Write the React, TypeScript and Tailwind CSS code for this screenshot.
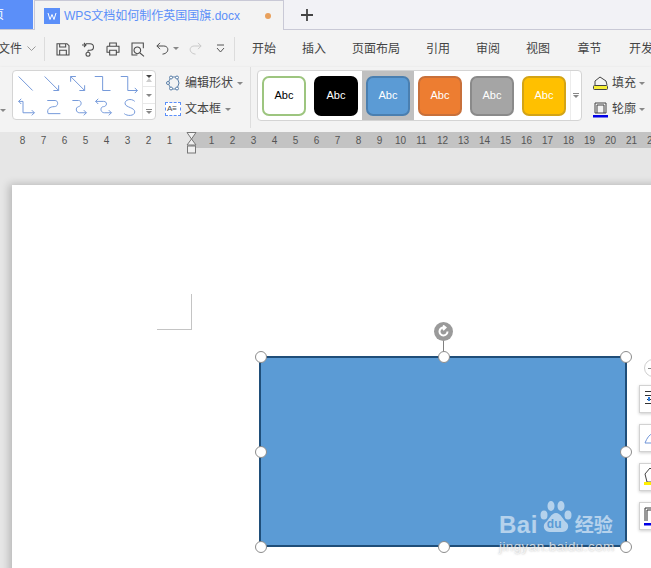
const FONT = "font-['Liberation_Sans','Noto_Sans_CJK_SC',sans-serif]";

const TABS = [
  { label: "开始", w: "w-[50px]" },
  { label: "插入", w: "w-[50px]" },
  { label: "页面布局", w: "w-[74px]" },
  { label: "引用", w: "w-[50px]" },
  { label: "审阅", w: "w-[50px]" },
  { label: "视图", w: "w-[50px]" },
  { label: "章节", w: "w-[53px]" },
  { label: "开发", w: "w-[50px]" },
];

const STYLES = [
  { cls: "bg-white border-[#9dc57f] text-black", sel: false },
  { cls: "bg-black border-black text-white", sel: false },
  { cls: "bg-[#5b9bd5] border-[#4a7fb0] text-white", sel: true },
  { cls: "bg-[#ed7d31] border-[#c8703a] text-white", sel: false },
  { cls: "bg-[#a5a5a5] border-[#8a8a8a] text-white", sel: false },
  { cls: "bg-[#ffc000] border-[#d3a416] text-white", sel: false },
];

const LEFT_RULER = [8, 7, 6, 5, 4, 3, 2, 1];
const RIGHT_RULER = Array.from({ length: 22 }, (_, i) => i + 1);

const LINES = [
  "M3 4 L19 20",
  "M3 4 L19 20 M19 14 V20 H13",
  "M3 4 L19 20 M19 14 V20 H13 M3 10 V4 H9",
  "M2 4 H11 V20 H20",
  "M2 4 H10 V20 H21 M18 17 L21 20 L18 23",
  "M8 5 H3 M3 5 L6 2 M3 5 L6 8 M8 5 V18 H21 M18 15 L21 18 L18 21",
  "M6 4 H15 C19 4 19 11 14 11 C9 11 5 14 7 19 H21",
  "M5 4 H12 C16 4 16 10 12 11 C8 12 9 18 13 18 H21 M18 15 L21 18 L18 21",
  "M3 5 L6 2 M3 5 L6 8 M3 5 H12 C17 5 16 11 12 11 C8 11 8 18 13 18 H21 M18 15 L21 18 L18 21",
  "M18 5 C14 1 6 3 7 8 C8 12 18 12 18 17 C18 22 9 22 6 19",
];

function Glyph({ d, w = 20 }: { d: string; w?: number }) {
  return (
    <svg width={w} height={w} viewBox="0 0 24 24" fill="none" stroke="#4b4b4b" strokeWidth={1.6}>
      <path d={d} />
    </svg>
  );
}

function Caret({ className = "border-t-[#888]" }: { className?: string }) {
  return (
    <span className={`inline-block w-0 h-0 border-x-[3px] border-x-transparent border-t-[3px] ${className}`} />
  );
}

function Handle({ className }: { className: string }) {
  return (
    <span className={`absolute w-[12px] h-[12px] rounded-full bg-white border border-[#8c8c8c] ${className}`} />
  );
}

function SideButton({ children, className }: { children: React.ReactNode; className: string }) {
  return (
    <div className={`absolute left-[639px] w-[30px] h-[28px] bg-white border border-[#d2d2d2] shadow-[0_1px_3px_rgba(0,0,0,0.2)] overflow-hidden ${className}`}>
      {children}
    </div>
  );
}

export default function App() {
  return (
    <div className={`${FONT} relative w-[651px] h-[568px] overflow-hidden bg-[#e6e6e6] text-[#444]`}>
      {/* title bar */}
      <div className="h-[30px] bg-[#f2f2f6] border-b border-[#c9c9d6] flex items-stretch">
        <div className="w-[33px] h-[29px] bg-[#5b8ff9] text-white text-[12px] flex items-center overflow-hidden">
          <span className="-ml-[8px] shrink-0">页</span>
        </div>
        <div className="ml-[1px] w-[250px] h-[30px] bg-[#f3f3f3] border-x border-t border-[#c9c9d6] flex items-center pl-[9px]">
          <span className="w-[16px] h-[16px] bg-[#5b8ff9] flex items-center justify-center shrink-0">
            <svg width="12" height="12" viewBox="0 0 12 12" fill="none" stroke="#fff" strokeWidth={1}>
              <path d="M2 3 L4 9.5 L6 4.5 L8 9.5 L10 3" />
            </svg>
          </span>
          <span className="ml-[4px] text-[12px] text-[#5b8ff9] whitespace-nowrap">WPS文档如何制作英国国旗.docx</span>
          <span className="ml-auto mr-[12px] w-[6px] h-[6px] rounded-full bg-[#e8a05c]" />
        </div>
        <div className="w-[46px] flex items-center justify-center">
          <svg width="14" height="14" viewBox="0 0 14 14" stroke="#444" strokeWidth={1.8}>
            <path d="M7 1 V13 M1 7 H13" />
          </svg>
        </div>
      </div>

      {/* quick access + menu */}
      <div className="h-[37px] bg-[#f3f3f3] flex items-center text-[12px] text-[#444]">
        <div className="w-[45px] shrink-0 flex items-center justify-end pr-[8px] gap-[5px] border-r border-[#dcdcdc] h-[24px] whitespace-nowrap overflow-hidden">
          <span className="shrink-0">文件</span>
          <svg width="9" height="6" viewBox="0 0 9 6" fill="none" stroke="#999" className="shrink-0">
            <path d="M0.5 0.5 L4.5 4.5 L8.5 0.5" />
          </svg>
        </div>
        <div className="w-[190px] shrink-0 flex items-center h-[24px] pl-[10px] border-r border-[#dcdcdc]">
          <div className="flex items-center gap-[9px]">
            <Glyph w={16} d="M3 4 H18 L21 7 V21 H3 Z M7 4 V9 H16 V4 M7 21 V14 H17 V21" />
            <Glyph w={16} d="M3 6 H9 M6 3 L9 6 L6 9 M9 4 H15 C22 4 22 14 15 14 H12 M12 14 V17 M12 17 A3 3 0 1 0 12 23 A3 3 0 1 0 12 17" />
            <Glyph w={16} d="M7 8 V3 H17 V8 M3 8 H21 V17 H17 M7 17 H3 V8 M7 14 H17 V21 H7 Z" />
            <Glyph w={16} d="M20 11 V3 H3 V21 H11 M11 9 A5 5 0 1 0 11 19 A5 5 0 1 0 11 9 M15 18 L21 23" />
          </div>
          <div className="ml-[9px] flex items-center gap-[3px]">
            <Glyph w={15} d="M8 3 L3 8 L8 13 M3 8 H14 C23 8 23 20 12 21" />
            <Caret />
          </div>
          <div className="ml-[9px]">
            <svg width="15" height="15" viewBox="0 0 24 24" fill="none" stroke="#c9c9c9" strokeWidth={1.6}>
              <path d="M16 3 L21 8 L16 13 M21 8 H10 C1 8 1 20 12 21" />
            </svg>
          </div>
          <div className="ml-[13px]">
            <svg width="9" height="9" viewBox="0 0 9 9" fill="none" stroke="#555">
              <path d="M1 1 H8 M1 4 L4.5 8 L8 4" />
            </svg>
          </div>
        </div>
        <div className="flex items-center pl-[4px] whitespace-nowrap">
          {TABS.map((t) => (
            <div key={t.label} className={`${t.w} text-center shrink-0`}>
              {t.label}
            </div>
          ))}
        </div>
      </div>

      {/* ribbon */}
      <div className="h-[65px] bg-[#f3f3f3] flex items-start pt-[3px] shadow-[0_1px_3px_rgba(0,0,0,0.12)] relative">
        <div className="w-[12px] flex items-center h-[51px] pt-[30px]">
          <Caret />
        </div>
        <div className="w-[144px] h-[50px] bg-white border border-[#d4d4d4] rounded-[4px] flex">
          <div className="w-[129px] grid grid-cols-5 pl-[3px] pt-[2px] content-start gap-x-[3px] gap-y-[3px]">
            {LINES.map((d) => (
              <svg key={d} width="21" height="21" viewBox="0 0 24 24" fill="none" stroke="#7096d8" strokeWidth={1.1}>
                <path d={d} />
              </svg>
            ))}
          </div>
          <div className="w-[13px] border-l border-[#e8e8e8] flex flex-col">
            <div className="h-[16px] border-b border-[#e8e8e8] flex items-center justify-center">
              <Caret className="border-t-0 border-b-[4px] border-b-[#ccc]" />
            </div>
            <div className="h-[17px] border-b border-[#e8e8e8] flex items-center justify-center">
              <Caret />
            </div>
            <div className="flex-1 flex flex-col items-center justify-center gap-[1px]">
              <span className="w-[6px] h-[1px] bg-[#888]" />
              <Caret />
            </div>
          </div>
        </div>

        <div className="w-[95px] h-[61px] -mt-[3px] pl-[9px] border-r border-[#dedede] text-[12px] flex flex-col gap-[8px] pt-[7px]">
          <div className="flex items-center gap-[4px] whitespace-nowrap">
            <svg width="16" height="16" viewBox="0 0 16 16" fill="none" stroke="#5a7fa8" strokeWidth={1}>
              <path d="M3 8 L6 2 H12 M3 8 L6 14 H12 M12 2 L14 8 L12 14" />
              <circle cx="3" cy="8" r="1.5" fill="#fff" />
              <circle cx="6" cy="2.5" r="1.5" fill="#fff" />
              <circle cx="6" cy="13.5" r="1.5" fill="#fff" />
              <circle cx="12" cy="2.5" r="1.5" fill="#fff" />
              <circle cx="12" cy="13.5" r="1.5" fill="#fff" />
            </svg>
            <span>编辑形状</span>
            <Caret />
          </div>
          <div className="flex items-center gap-[4px] whitespace-nowrap">
            <span className="w-[16px] h-[14px] border border-dashed border-[#5b8ff9] bg-white text-[8px] leading-[12px] text-[#444] pl-[1px]">
              A≡
            </span>
            <span>文本框</span>
            <Caret />
          </div>
        </div>

        <div className="ml-[6px] w-[325px] h-[51px] bg-white border border-[#d4d4d4] rounded-[4px] flex items-stretch">
          <div className="flex-1 flex items-center">
            {STYLES.map((s) => (
              <div
                key={s.cls}
                className={`w-[52px] h-[49px] flex items-center justify-center ${s.sel ? "bg-[#c0c0c0]" : ""}`}
              >
                <div className={`w-[44px] h-[40px] rounded-[7px] border-2 text-[11px] flex items-center justify-center ${s.cls}`}>
                  Abc
                </div>
              </div>
            ))}
          </div>
          <div className="w-[12px] border-l border-[#ececec] flex flex-col items-center justify-center gap-[1px]">
            <span className="w-[6px] h-[1px] bg-[#888]" />
            <Caret />
          </div>
        </div>

        <div className="pl-[10px] text-[12px] flex flex-col gap-[8px] pt-[4px]">
          <div className="flex items-center gap-[3px] whitespace-nowrap">
            <svg width="17" height="17" viewBox="0 0 17 17" fill="none" stroke="#444">
              <path d="M3 10 V6 L8 2 L14 6 L15 10" />
              <rect x="1.5" y="10.5" width="14" height="4" rx="1" fill="#f6ee35" />
            </svg>
            <span>填充</span>
            <Caret />
          </div>
          <div className="flex items-center gap-[3px] whitespace-nowrap">
            <svg width="17" height="17" viewBox="0 0 17 17" fill="none" stroke="#444">
              <path d="M3 12 V2 H14 V12 H3 M5 12 V4 H12 V12" />
              <rect x="1" y="14" width="15" height="2.5" fill="#0000e6" stroke="none" />
            </svg>
            <span>轮廓</span>
            <Caret />
          </div>
        </div>
      </div>

      {/* ruler */}
      <div className="h-[16px] flex items-center text-[10px] text-[#555] relative">
        <div className="w-[191px] shrink-0 h-full flex items-center bg-[#e6e6e6]">
          <div className="ml-[12px] flex">
            {LEFT_RULER.map((n) => (
              <span key={n} className="w-[21px] text-center">{n}</span>
            ))}
          </div>
        </div>
        <div className="flex-1 min-w-0 overflow-hidden h-full bg-[#c3c3c3] flex items-center pl-[10px] whitespace-nowrap">
          {RIGHT_RULER.map((n) => (
            <span key={n} className="w-[21px] text-center shrink-0">{n}</span>
          ))}
        </div>
      </div>
      {/* ruler indent marker */}
      <svg className="absolute left-[186px] top-[132px]" width="11" height="22" viewBox="0 0 11 22" fill="#f0f0f0" stroke="#777">
        <path d="M1 0.5 H10 L5.5 7 Z M5.5 7 L10 13 H1 Z" />
        <rect x="1.5" y="14" width="8" height="7" />
      </svg>

      {/* page */}
      <div className="absolute left-[12px] top-[185px] w-[660px] h-[420px] bg-white shadow-[-3px_-1px_8px_rgba(0,0,0,0.2)]">
        <div className="absolute left-[145px] top-[109px] w-[35px] h-[36px] border-r border-b border-[#c4c4c4]" />
      </div>

      {/* selected shape */}
      <div className="absolute left-[259px] top-[356px] w-[368px] h-[191px] bg-[#5b9bd5] border-2 border-[#1f4e79]" />
      <span className="absolute left-[443px] top-[340px] w-[1px] h-[17px] bg-[#808080]" />
      <span className="absolute left-[434px] top-[322px] w-[19px] h-[19px] rounded-full bg-[#9a9a9a] flex items-center justify-center">
        <svg width="13" height="13" viewBox="0 0 13 13" fill="none" stroke="#fff" strokeWidth={2}>
          <path d="M10.5 6.5 A4 4 0 1 1 7 2.5 M6 0.5 L8.5 2.5 L6 5" />
        </svg>
      </span>
      <Handle className="left-[254.5px] top-[351px]" />
      <Handle className="left-[437.5px] top-[351px]" />
      <Handle className="left-[619.5px] top-[351px]" />
      <Handle className="left-[254.5px] top-[446px]" />
      <Handle className="left-[619.5px] top-[446px]" />
      <Handle className="left-[254.5px] top-[540.5px]" />
      <Handle className="left-[437.5px] top-[540.5px]" />
      <Handle className="left-[619.5px] top-[540.5px]" />

      {/* floating side toolbar */}
      <span className="absolute left-[644px] top-[359px] w-[18px] h-[18px] rounded-full bg-white border border-[#cfcfcf]">
        <span className="absolute left-[3px] top-[8px] w-[5px] h-[1px] bg-[#888]" />
      </span>
      <SideButton className="top-[385px]">
        <svg width="28" height="26" viewBox="0 0 28 26" fill="none" stroke="#333">
          <path d="M5 5.5 H20 M5 9.5 H20 M7 13.5 H20 M5 17.5 H20" />
          <path d="M9 11 V15" stroke="#2f7fe0" strokeWidth={2} />
        </svg>
      </SideButton>
      <SideButton className="top-[424px]">
        <svg width="28" height="26" viewBox="0 0 28 26" fill="none" stroke="#6f94d8">
          <path d="M5 18 C7 13 9 10 13 8 M5 18 H20" />
        </svg>
      </SideButton>
      <SideButton className="top-[463px]">
        <svg width="28" height="26" viewBox="0 0 28 26" fill="none" stroke="#444">
          <path d="M5 10 L10 4 L16 10 L12 18 L7 18 Z" />
          <rect x="4" y="18" width="18" height="3" fill="#ffef00" stroke="none" />
        </svg>
      </SideButton>
      <SideButton className="top-[502px]">
        <svg width="28" height="26" viewBox="0 0 28 26" fill="none" stroke="#333">
          <path d="M5 18 V5 H20 M7 18 V7 H20" />
          <rect x="4" y="20" width="18" height="2.5" fill="#0000e6" stroke="none" />
        </svg>
      </SideButton>

      {/* watermark */}
      <div className="absolute left-[499px] top-[499px] text-white/55 select-none">
        <div className="flex items-end">
          <span className="text-[24px] font-bold leading-[24px] tracking-[0.5px] -mb-[2px]">Bai</span>
          <span className="relative w-[35px] h-[36px]">
            <svg className="absolute left-0 top-0" width="35" height="36" viewBox="0 0 35 34" fill="currentColor">
              <ellipse cx="6" cy="15" rx="3.5" ry="4.5" />
              <ellipse cx="13" cy="6" rx="3.5" ry="5" />
              <ellipse cx="23" cy="6" rx="3.5" ry="5" />
              <ellipse cx="30" cy="15" rx="3.5" ry="4.5" />
              <path d="M18 13 C23 13 25 20 29 23 C32 27 29 32 24 32 H12 C7 32 4 27 7 23 C11 20 13 13 18 13 Z" />
            </svg>
            <span className="absolute left-[9px] top-[18px] text-[12px] leading-[14px] font-bold text-[#5b9bd5]">du</span>
          </span>
          <span className="text-[19px] font-bold leading-[22px] ml-[2px] -mb-[2px]">经验</span>
        </div>
        <div className="text-[13.5px] leading-[15px] tracking-[0.4px] text-white/70 mt-[4px] [text-shadow:0_0_2px_rgba(110,110,110,0.55)]">jingyan.baidu.com</div>
      </div>
    </div>
  );
}
